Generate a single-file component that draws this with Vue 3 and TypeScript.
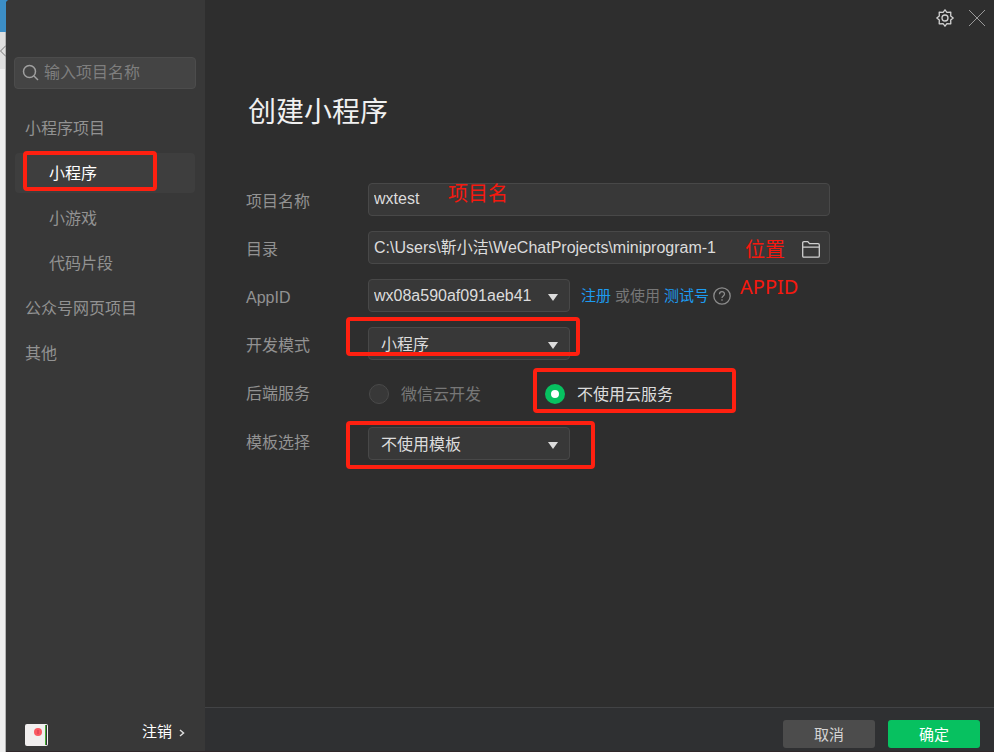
<script setup lang="ts">
import { ref } from 'vue'

interface NavItem {
  label: string
  child: boolean
}

const navItems: NavItem[] = [
  { label: '小程序项目', child: false },
  { label: '小程序', child: true },
  { label: '小游戏', child: true },
  { label: '代码片段', child: true },
  { label: '公众号网页项目', child: false },
  { label: '其他', child: false },
]

const activeNav = ref('小程序')
const keyword = ref('')
const projectName = ref('wxtest')
const directory = ref('C:\\Users\\靳小洁\\WeChatProjects\\miniprogram-1')
const appId = ref('wx08a590af091aeb41')
const mode = ref('小程序')
const backend = ref('none')
const template = ref('不使用模板')
</script>

<template>
  <div class="desktop">
    <div class="behind">
      <div class="behind-title"></div>
      <div class="behind-bar">
        <svg width="6" height="14" viewBox="0 0 6 14"><path d="M6 1.5 0.5 7 6 12.5" /></svg>
      </div>
    </div>

    <div class="window">
      <aside class="sidebar">
        <label class="search">
          <svg width="18" height="18" viewBox="0 0 18 18"><circle cx="7.5" cy="7.5" r="6" /><path d="M12 12l4 4" /></svg>
          <input v-model="keyword" type="text" placeholder="输入项目名称" aria-label="输入项目名称" />
        </label>

        <nav class="nav">
          <button
            v-for="item in navItems"
            :key="item.label"
            type="button"
            class="nav-item"
            :class="{ child: item.child, active: item.label === activeNav }"
            @click="activeNav = item.label"
          >
            {{ item.label }}
            <span v-if="item.label === '小程序'" class="mark mark-nav"></span>
          </button>
        </nav>

        <div class="account">
          <svg class="avatar" width="23" height="22" viewBox="0 0 23 22">
            <rect width="23" height="22" rx="2" fill="#f1efef" />
            <rect x="20" y="1" width="1" height="20" fill="#43ad32" />
            <rect x="21" y="1" width="1" height="20" fill="#34343a" />
            <circle cx="13" cy="8" r="4" fill="#fa5a62" />
            <path d="M13 6v4" stroke="#e8485a" stroke-width="2" />
          </svg>
          <button type="button" class="logout">
            注销
            <svg width="6" height="8" viewBox="0 0 6 8"><path d="M1 1l3.5 3L1 7" /></svg>
          </button>
        </div>
      </aside>

      <main class="main">
        <header class="tools">
          <button type="button" aria-label="设置">
            <svg width="18" height="18" viewBox="0 0 18 18" class="gear">
              <path d="M9 .8 10.900 3.300 14.800 3.200 14.700 7.100 17.200 9 14.700 10.900 14.800 14.800 10.900 14.700 9 17.200 7.100 14.700 3.200 14.800 3.300 10.900.8 9 3.300 7.100 3.200 3.200 7.100 3.300z" />
              <circle cx="9" cy="9" r="3" />
            </svg>
          </button>
          <button type="button" aria-label="关闭">
            <svg width="18" height="18" viewBox="0 0 18 18" class="close"><path d="M1 1l16 16M17 1L1 17" /></svg>
          </button>
        </header>

        <form id="create" class="content" @submit.prevent>
          <h1>创建小程序</h1>

          <div class="row">
            <label class="name" for="project">项目名称</label>
            <div class="field">
              <input id="project" v-model="projectName" class="box" type="text" />
              <span class="note note-name">项目名</span>
            </div>
          </div>

          <div class="row">
            <label class="name" for="directory">目录</label>
            <div class="field">
              <div class="box path">
                <input id="directory" v-model="directory" type="text" />
                <button type="button" aria-label="选择目录">
                  <svg width="18" height="17" viewBox="0 0 18 17"><path d="M.7 15V2Q.7.700 2 .7h3.800l1.700 2H16q1.300 0 1.300 1.300v11q0 1.200-1.300 1.200H2Q.7 16.200.7 15zM.7 6.200h16.600" /></svg>
                </button>
              </div>
              <span class="note note-path">位置</span>
            </div>
          </div>

          <div class="row">
            <label class="name" for="appid">AppID</label>
            <div class="field inline">
              <div class="picker">
                <select id="appid" v-model="appId" class="box tight">
                  <option>wx08a590af091aeb41</option>
                </select>
                <svg width="12" height="8" viewBox="0 0 12 8"><path d="M1 0h10L6 7z" /></svg>
              </div>
              <p class="hint">
                <a href="#register">注册</a>
                <span>或使用</span>
                <a href="#test">测试号</a>
                <button type="button" aria-label="帮助">
                  <svg width="18" height="18" viewBox="0 0 18 18"><circle cx="9" cy="9" r="8.200" /><path d="M6.500 7.200C6.500 3.800 11.500 3.800 11.500 7c0 1.900-2.500 1.900-2.500 4M9 12.300v1.500" /></svg>
                </button>
              </p>
              <span class="note note-id">APPID</span>
            </div>
          </div>

          <div class="row">
            <label class="name" for="mode">开发模式</label>
            <div class="field">
              <div class="picker">
                <select id="mode" v-model="mode" class="box">
                  <option>小程序</option>
                </select>
                <svg width="12" height="8" viewBox="0 0 12 8"><path d="M1 0h10L6 7z" /></svg>
              </div>
              <span class="mark mark-mode"></span>
            </div>
          </div>

          <div class="row level tall">
            <span id="backend" class="name">后端服务</span>
            <div class="field radios" role="radiogroup" aria-labelledby="backend">
              <label class="radio">
                <input v-model="backend" type="radio" name="backend" value="cloud" />
                <span>微信云开发</span>
              </label>
              <label class="radio">
                <input v-model="backend" type="radio" name="backend" value="none" />
                <span>不使用云服务</span>
              </label>
              <span class="mark mark-radio"></span>
            </div>
          </div>

          <div class="row level">
            <label class="name" for="template">模板选择</label>
            <div class="field">
              <div class="picker">
                <select id="template" v-model="template" class="box">
                  <option>不使用模板</option>
                </select>
                <svg width="12" height="8" viewBox="0 0 12 8"><path d="M1 0h10L6 7z" /></svg>
              </div>
              <span class="mark mark-template"></span>
            </div>
          </div>
        </form>

        <footer class="actions">
          <button type="button">取消</button>
          <button type="submit" form="create" class="primary">确定</button>
        </footer>
      </main>
    </div>
  </div>
</template>

<style>
body {
  margin: 0;
  background: #f0f0f0;
}
</style>

<style scoped>
* {
  box-sizing: border-box;
}

.desktop {
  display: flex;
  min-height: 100vh;
  background: #3c8ec6;
  font: 16px/24px 'Liberation Sans', 'Noto Sans CJK SC', sans-serif;
  color: #929292;
}

button,
input,
select {
  margin: 0;
  padding: 0;
  border: 0;
  background: none;
  color: inherit;
  font: inherit;
  outline: none;
}

button {
  cursor: pointer;
}

svg {
  display: block;
  flex: none;
  fill: none;
}

.behind {
  width: 6px;
  flex: none;
  border-right: 1px solid #b4b4b4;
  background: #efefef;
}

.behind-title {
  height: 32px;
  margin-right: -1px;
  background: #3c8ec6;
}

.behind-bar {
  display: flex;
  align-items: center;
  height: 37px;
  background: #dfdfdf;
}

.behind-bar svg {
  stroke: #777;
}

.window {
  display: flex;
  flex: 1;
  min-width: 0;
  border-top-left-radius: 4px;
  border-bottom: 1px solid #30272a;
  overflow: hidden;
  background: #2e2e2e;
}

.sidebar {
  display: flex;
  flex-direction: column;
  flex: none;
  width: 199px;
  padding: 57px 9px 5px 8px;
  background: #383838;
}

.search {
  display: flex;
  align-items: center;
  gap: 4px;
  height: 32px;
  padding: 0 7px;
  border: 1px solid #4c4c4c;
  border-radius: 4px;
  background: #444;
}

.search svg {
  stroke: #a0a0a0;
  stroke-width: 1.5;
}

.search input {
  width: 100%;
  min-width: 0;
}

.search input::placeholder {
  color: #7e7e7e;
  opacity: 1;
}

.nav {
  display: flex;
  flex-direction: column;
  gap: 5px;
  padding: 19px 1px 0;
}

.nav-item {
  position: relative;
  height: 40px;
  padding: 2px 10px 0;
  border-radius: 4px;
  text-align: left;
}

.nav-item.child {
  padding-left: 34px;
}

.nav-item.active {
  background: #3e3e3e;
  color: #fff;
}

.account {
  display: flex;
  align-items: flex-end;
  justify-content: space-between;
  margin-top: auto;
  padding: 0 11px;
}

.logout {
  display: flex;
  align-items: center;
  gap: 7px;
  height: 24px;
  margin-bottom: 2px;
  color: #fff;
  font-size: 15px;
}

.logout svg {
  margin-top: 2px;
  stroke: #ddd;
  stroke-width: 1.5;
}

.main {
  display: flex;
  flex-direction: column;
  flex: 1;
  min-width: 0;
}

.tools {
  display: flex;
  justify-content: flex-end;
  gap: 14px;
  padding: 9px 8px 0;
}

.gear {
  stroke: #d2d2d2;
  stroke-width: 1.3;
  stroke-linejoin: round;
}

.close {
  stroke: #999;
}

.content {
  flex: 1;
  padding: 66px 41px 40px;
}

h1 {
  margin: 0 0 50px 2px;
  color: #f0f0f0;
  font-size: 28px;
  font-weight: 400;
  line-height: 40px;
}

.row {
  display: flex;
  height: 33px;
  margin-bottom: 15px;
}

.row.tall {
  height: 37px;
}

.name {
  flex: none;
  width: 122px;
  padding-top: 4px;
  line-height: 29px;
}

.row.level .name {
  padding-top: 0;
  line-height: 32px;
}

.row.tall .name {
  line-height: 38px;
}

.field {
  position: relative;
  flex: 1;
  max-width: 462px;
}

.box {
  display: block;
  width: 100%;
  height: 33px;
  padding: 0 5px 2px;
  border: 1px solid #484848;
  border-radius: 4px;
  background: #383838;
  color: #dcdcdc;
}

.path {
  display: flex;
  align-items: center;
  gap: 8px;
  padding: 0 9px 0 5px;
}

.path input {
  flex: 1;
  min-width: 0;
}

.path svg {
  margin-top: 3px;
  stroke: #cfcfcf;
  stroke-width: 1.3;
}

.inline {
  display: flex;
  align-items: center;
}

.picker {
  display: grid;
  align-items: center;
  width: 202px;
  flex: none;
}

.picker > * {
  grid-area: 1 / 1;
}

.picker svg {
  justify-self: end;
  margin: 4px 11px 0 0;
  fill: #dcdcdc;
  pointer-events: none;
}

select.box {
  padding: 2px 30px 0 12px;
  appearance: none;
}

select.tight {
  padding: 0 30px 0 5px;
}

.hint {
  display: flex;
  align-items: center;
  gap: 4px;
  margin: 0 0 0 11px;
  color: #777;
  font-size: 15px;
  white-space: nowrap;
}

.hint a {
  color: #1d9bf0;
  text-decoration: none;
}

.hint svg {
  stroke: #8c8c8c;
  stroke-width: 1.3;
}

.radios {
  display: flex;
  align-items: center;
}

.radio {
  display: flex;
  align-items: center;
  gap: 12px;
  width: 176px;
  padding-left: 1px;
  color: #777;
  white-space: nowrap;
}

.radio span {
  padding-top: 2px;
}

.radio:has(input:checked) {
  color: #dcdcdc;
}

.radio input {
  width: 20px;
  height: 20px;
  flex: none;
  border: 1px solid #4a4a4a;
  border-radius: 50%;
  background: #383838;
  appearance: none;
}

.radio input:checked {
  border: 6px solid #07c160;
  background: #fff;
}

.actions {
  display: flex;
  justify-content: flex-end;
  gap: 13px;
  padding: 12px 14px 3px;
  border-top: 1px solid #424345;
  background: #2f3032;
}

.actions button {
  width: 92px;
  height: 28px;
  padding-top: 2px;
  border-radius: 3px;
  background: #4c4c4c;
  color: #d4d4d4;
  font-size: 15px;
}

.actions .primary {
  background: #07c160;
  color: #fff;
}

/* Red tutorial annotations laid over the form */
.mark,
.note {
  position: absolute;
  pointer-events: none;
}

.mark {
  border: 4px solid #ff2010;
  border-radius: 4px;
}

.note {
  color: #f5190f;
  font: 20px/24px 'Noto Sans', 'Noto Sans CJK SC', sans-serif;
  white-space: nowrap;
}

.mark-nav {
  top: -2px;
  left: 8px;
  width: 134px;
  height: 40px;
}

.mark-mode {
  top: -10px;
  left: -22px;
  width: 234px;
  height: 39px;
}

.mark-radio {
  top: -7px;
  left: 165px;
  width: 203px;
  height: 45px;
}

.mark-template {
  top: -6px;
  left: -22px;
  width: 249px;
  height: 48px;
}

.note-name {
  top: -1px;
  left: 80px;
}

.note-path {
  top: 7px;
  left: 377px;
}

.note-id {
  top: -4px;
  left: 372px;
}
</style>
